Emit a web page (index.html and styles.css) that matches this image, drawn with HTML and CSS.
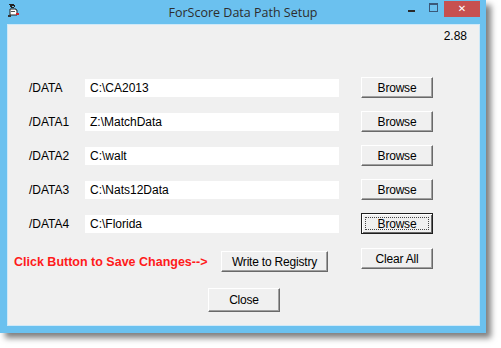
FILE: index.html
```html
<!DOCTYPE html>
<html>
<head>
<meta charset="utf-8">
<link rel="stylesheet" href="styles.css">
</head>
<body>
<div class="window">
  <div class="titlebar">
    <svg class="appicon" width="14" height="15" viewBox="0 0 14 15">
      <path d="M2 1h5v1h1v2H7V3H5v1h2v1H4V4H3V2H2z" fill="#222"/>
      <path d="M3 6h6v1h1v5H3z" fill="#fff" stroke="#222" stroke-width="1"/>
      <rect x="4" y="8" width="4" height="1" fill="#555"/>
      <rect x="9" y="10" width="3" height="2" fill="#d0202a"/>
      <rect x="1" y="12" width="3" height="2" fill="#333"/>
    </svg>
    <div class="title">ForScore Data Path Setup</div>
    <div class="controls">
      <span class="ctl-min"></span>
      <span class="ctl-max"></span>
      <span class="ctl-close">&#x2715;</span>
    </div>
  </div>
  <div class="client">
    <div class="version">2.88</div>
    <div class="rows">
      <div class="label">/DATA</div><div class="field">C:\CA2013</div><button class="btn">Browse</button>
      <div class="label">/DATA1</div><div class="field">Z:\MatchData</div><button class="btn">Browse</button>
      <div class="label">/DATA2</div><div class="field">C:\walt</div><button class="btn">Browse</button>
      <div class="label">/DATA3</div><div class="field">C:\Nats12Data</div><button class="btn">Browse</button>
      <div class="label">/DATA4</div><div class="field">C:\Florida</div><button class="btn focus">Browse</button>
    </div>
    <div class="actions">
      <div class="hint">Click Button to Save Changes--&gt;</div>
      <button class="btn wide">Write to Registry</button>
      <button class="btn clear">Clear All</button>
    </div>
    <div class="closerow">
      <button class="btn tall">Close</button>
    </div>
  </div>
</div>
</body>
</html>
```
FILE: styles.css
```css
html, body {
  margin: 0;
  padding: 0;
  background: #ffffff;
}
body {
  width: 501px;
  height: 348px;
  overflow: hidden;
  font-family: "Liberation Sans", Arial, sans-serif;
  font-size: 12px;
  color: #000;
}
.window {
  width: 486px;
  height: 333px;
  background: #6bc1ef;
  display: flex;
  flex-direction: column;
  box-shadow: 5px 5px 6px rgba(0, 0, 0, 0.5);
}
.titlebar {
  height: 24px;
  flex: none;
  display: flex;
  align-items: flex-start;
  position: relative;
}
.appicon {
  margin: 3px 0 0 7px;
}
.title {
  position: absolute;
  left: 0;
  right: 0;
  top: 4px;
  text-align: center;
  font-family: "Open Sans", "Noto Sans", sans-serif;
  font-size: 12.5px;
  color: #2d2d2d;
  pointer-events: none;
}
.controls {
  margin-left: auto;
  margin-right: 6px;
  display: flex;
  align-items: flex-start;
}
.ctl-min {
  width: 7px;
  height: 2px;
  background: #2a2a2a;
  margin: 10px 14px 0 0;
}
.ctl-max {
  width: 7px;
  height: 6px;
  border: 1px solid #3a5878;
  border-top-width: 2px;
  margin: 3px 6px 0 0;
  box-sizing: content-box;
}
.ctl-close {
  width: 36px;
  height: 16px;
  margin-top: 1px;
  background: #c75050;
  color: #fff;
  font-family: "DejaVu Sans", sans-serif;
  font-size: 10px;
  font-weight: bold;
  line-height: 16px;
  text-align: center;
}
.client {
  flex: 1;
  margin: 0 6px 7px 7px;
  background: #f0f0f0;
  border: 1px solid #cfe9f8;
  display: flex;
  flex-direction: column;
}
.version {
  text-align: right;
  padding: 4px 12px 0 0;
  line-height: 15px;
}
.rows {
  margin-top: 33px;
  padding-left: 21px;
  display: grid;
  grid-template-columns: 56px 254px 94px;
  grid-auto-rows: 21px;
  row-gap: 13px;
  align-items: center;
}
.label {
  line-height: 18px;
}
.field {
  height: 18px;
  line-height: 18px;
  background: #fff;
  padding-left: 5px;
  box-sizing: border-box;
}
.btn {
  position: relative;
  width: 72px;
  height: 21px;
  padding: 0;
  margin: 0;
  font-family: "Liberation Sans", Arial, sans-serif;
  font-size: 12px;
  color: #000;
  background: #f0f0f0;
  border: 1px solid;
  border-color: #fff #696969 #696969 #fff;
  box-shadow: inset -1px -1px 0 #a0a0a0;
  letter-spacing: -0.2px;
}
.rows .btn {
  justify-self: end;
}
.btn.focus {
  border: 1px solid #1e1e1e;
  box-shadow: inset 1px 1px 0 #fff, inset -1px -1px 0 #696969;
}
.btn.focus::after {
  content: "";
  position: absolute;
  left: 3px;
  top: 3px;
  right: 3px;
  bottom: 3px;
  border: 1px dotted #444;
}
.actions {
  margin-top: 14px;
  padding-left: 6px;
  display: flex;
  align-items: flex-start;
}
.hint {
  width: 207px;
  margin-top: 7px;
  color: #ff1a1a;
  font-weight: bold;
  font-size: 12.5px;
  line-height: 15px;
  white-space: nowrap;
}
.btn.wide {
  width: 107px;
  margin-top: 3px;
}
.btn.clear {
  margin-left: 33px;
}
.closerow {
  margin-top: 16px;
  padding-left: 200px;
}
.btn.tall {
  height: 24px;
}
```
